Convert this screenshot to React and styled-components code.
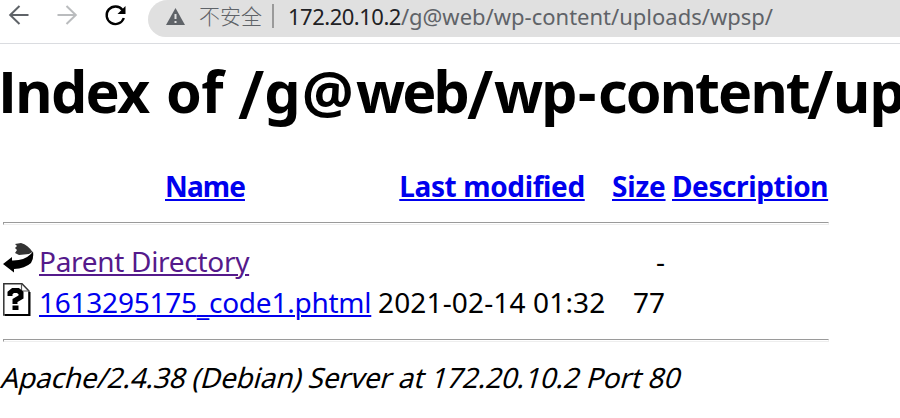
import React from 'react';
import styled, { createGlobalStyle } from 'styled-components';

const GlobalStyle = createGlobalStyle`
  html, body { margin: 0; background: #fff; overflow: hidden; }
  body { font-family: "Noto Sans", "Open Sans", sans-serif; color: #000; }
`;

const Window = styled.div`
  width: 900px;
  height: 418px;
  overflow: hidden;
  display: flex;
  flex-direction: column;
`;

const Toolbar = styled.header`
  height: 43px;
  flex: none;
  display: flex;
  align-items: flex-start;
  border-bottom: 1px solid #dadce0;
  overflow: hidden;
`;

const NavIcons = styled.svg`
  flex: none;
  width: 148px;
  height: 37px;
`;

const AddressBar = styled.div`
  flex: 1;
  height: 37px;
  box-sizing: border-box;
  padding-left: 18px;
  background: #e0e0e0;
  border-radius: 20px 0 0 18px;
  display: flex;
  align-items: center;
  white-space: nowrap;
`;

const WarningIcon = styled.svg`
  width: 19px;
  height: 18px;
  margin: 0 14px 4px 0;
  flex: none;
`;

const SecurityLabel = styled.span`
  width: 62px;
  height: 37px;
  font: 300 21px/31px "Noto Sans CJK SC", sans-serif;
  color: #5f6368;
`;

const Divider = styled.i`
  width: 2px;
  height: 24px;
  margin: 0 14px 5px 11px;
  background: #9a9a9a;
`;

const UrlPart = styled.span`
  font-size: 22px;
  line-height: 32px;
  height: 37px;
  letter-spacing: ${p => p.$spacing || 0}px;
  color: ${p => p.$color};
`;

const Title = styled.h1`
  display: flex;
  flex: none;
  margin: 15px 0 0 -2px;
  height: 107px;
  font-size: 57.4px;
  line-height: 64px;
  font-weight: 700;
  white-space: nowrap;
`;

const Word = styled.span`
  flex: none;
  width: ${p => p.$width}px;
  letter-spacing: ${p => p.$spacing || 0}px;
`;

const Slash = styled.span`
  font-size: 66px;
  line-height: 0;
  font-weight: 600;
  vertical-align: -6px;
`;

const PlainCapital = styled.span`
  font-family: "Open Sans", sans-serif;
`;

const Listing = styled.section`
  width: 826px;
  margin-left: 3px;
`;

const Row = styled.div`
  display: grid;
  grid-template-columns: 36px 332px 7px 228px 6px 53px 7px 157px;
  height: ${p => p.$height}px;
  line-height: ${p => p.$height}px;
  font-size: 28px;
  font-weight: ${p => (p.$head ? 700 : 400)};
  white-space: nowrap;
`;

const Cell = styled.div`
  grid-column: ${p => p.$col};
  text-align: ${p => p.$align || 'left'};
  letter-spacing: ${p => p.$spacing || 0}px;
`;

const Link = styled.a`
  color: ${p => (p.$visited ? '#551a8b' : '#0000ee')};
  text-decoration: underline;
  text-decoration-thickness: 2px;
  text-underline-offset: 2px;
`;

const LowLine = styled.span`
  vertical-align: -3px;
  line-height: 1;
`;

const Rule = styled.hr`
  height: 1px;
  margin: ${p => p.$margin};
  border: 1px solid;
  border-color: #9a9a9a #eee #eee #9a9a9a;
`;

const FileIcon = styled.svg`
  display: block;
  width: 32px;
  height: 34px;
  margin-top: ${p => p.$top}px;
`;

const Signature = styled.address`
  font-style: normal;
  font-size: 28px;
  line-height: 40px;
  letter-spacing: -0.2px;
  white-space: nowrap;
  transform: skewX(-15deg);
  transform-origin: 0 30px;
`;

function BackArrow() {
  return (
    <FileIcon $top={2} viewBox="0 0 32 34">
      <path d="M12 1L18 0Q25 2 29.500 9L26 11L16 12L12 10L14 7L12 5L14 3Z" fill="#333" />
      <path d="M30 8.500Q31 16 28 20Q22 25.500 11 26L11 29.500L0 21L9 14L9 17.500Q23 18 30 8.500Z" fill="#000" />
    </FileIcon>
  );
}

function UnknownFile() {
  return (
    <FileIcon $top={1} viewBox="0 0 32 34">
      <path d="M.8 .8H19L26 8V32H.8Z" fill="#fff" stroke="#333" strokeWidth="1.5" />
      <path d="M18.500 1V8H26" fill="none" stroke="#555" strokeWidth="1.2" />
      <path d="M2 32H26.500V9" fill="none" stroke="#000" strokeWidth="2" />
      <path d="M7 13V10L10 7.500H15L18 10V14L12 17.500V21" fill="none" stroke="#000" strokeWidth="5" />
      <path d="M9.500 22.500H15.500V27H9.500Z" />
    </FileIcon>
  );
}

export default function App() {
  return (
    <Window>
      <GlobalStyle />
      <Toolbar>
        <NavIcons viewBox="0 0 148 37" fill="none" strokeWidth="2">
          <path d="M28.500 15H10M19.500 6L10.200 15L19.500 24" stroke="#5f6368" />
          <path d="M57.500 15H76M66.500 6L75.800 15L66.500 24" stroke="#babcbe" />
          <path d="M122.500 10A8.800 8.800 0 1 0 123.800 18" stroke="#000" strokeWidth="2.4" />
          <path d="M125.500 6V14H117.500Z" fill="#000" />
        </NavIcons>
        <AddressBar>
          <WarningIcon viewBox="0 0 19 18">
            <path d="M9.500 0L19 17H0Z" fill="#5f6368" />
            <path d="M9.500 6V11M9.500 13V15" stroke="#e0e0e0" strokeWidth="2" />
          </WarningIcon>
          <SecurityLabel>不安全</SecurityLabel>
          <Divider />
          <UrlPart $color="#202124" $spacing={-0.5}>172.20.10.2</UrlPart>
          <UrlPart $color="#5f6368">/g@web/wp-content/uploads/wpsp/</UrlPart>
        </AddressBar>
      </Toolbar>
      <Title>
        <Word $width={168} $spacing={-1.7}><PlainCapital>I</PlainCapital>ndex </Word>
        <Word $width={72} $spacing={-0.7}>of </Word>
        <Word $width={64}><Slash>/</Slash>g</Word>
        <Word $width={54}>@</Word>
        <Word $width={111} $spacing={-3}>web</Word>
        <Word $width={27}><Slash>/</Slash></Word>
        <Word $width={84} $spacing={-2}>wp</Word>
        <Word $width={20}>-</Word>
        <Word $width={209} $spacing={-1.9}>content</Word>
        <Word $width={26}><Slash>/</Slash></Word>
        <Word $width={220} $spacing={-0.7}>uploads</Word>
        <Word $width={28}><Slash>/</Slash></Word>
        <Word $width={150}>wpsp</Word>
      </Title>
      <Listing>
        <Row $head $height={40}>
          <Cell $col={2} $align="center" $spacing={-0.9}><Link>Name</Link></Cell>
          <Cell $col={4} $align="center" $spacing={-0.38}><Link>Last modified</Link></Cell>
          <Cell $col={6} $align="right" $spacing={-0.2}><Link>Size</Link></Cell>
          <Cell $col={8} $spacing={-0.4}><Link>Description</Link></Cell>
        </Row>
        <Rule $margin="16px 0 16px" />
        <Row $height={41}>
          <Cell $col={1}><BackArrow /></Cell>
          <Cell $col={2} $spacing={-0.3}><Link $visited>Parent Directory</Link></Cell>
          <Cell $col={6} $align="right">-</Cell>
        </Row>
        <Row $height={41}>
          <Cell $col={1}><UnknownFile /></Cell>
          <Cell $col={2} $spacing={-0.24}><Link>1613295175<LowLine>_</LowLine>code1.phtml</Link></Cell>
          <Cell $col={4} $spacing={0.15}>2021-02-14 01:32</Cell>
          <Cell $col={6} $align="right">77</Cell>
        </Row>
        <Rule $margin="16px 0 15px" />
      </Listing>
      <Signature>Apache/2.4.38 (Debian) Server at 172.20.10.2 Port 80</Signature>
    </Window>
  );
}
